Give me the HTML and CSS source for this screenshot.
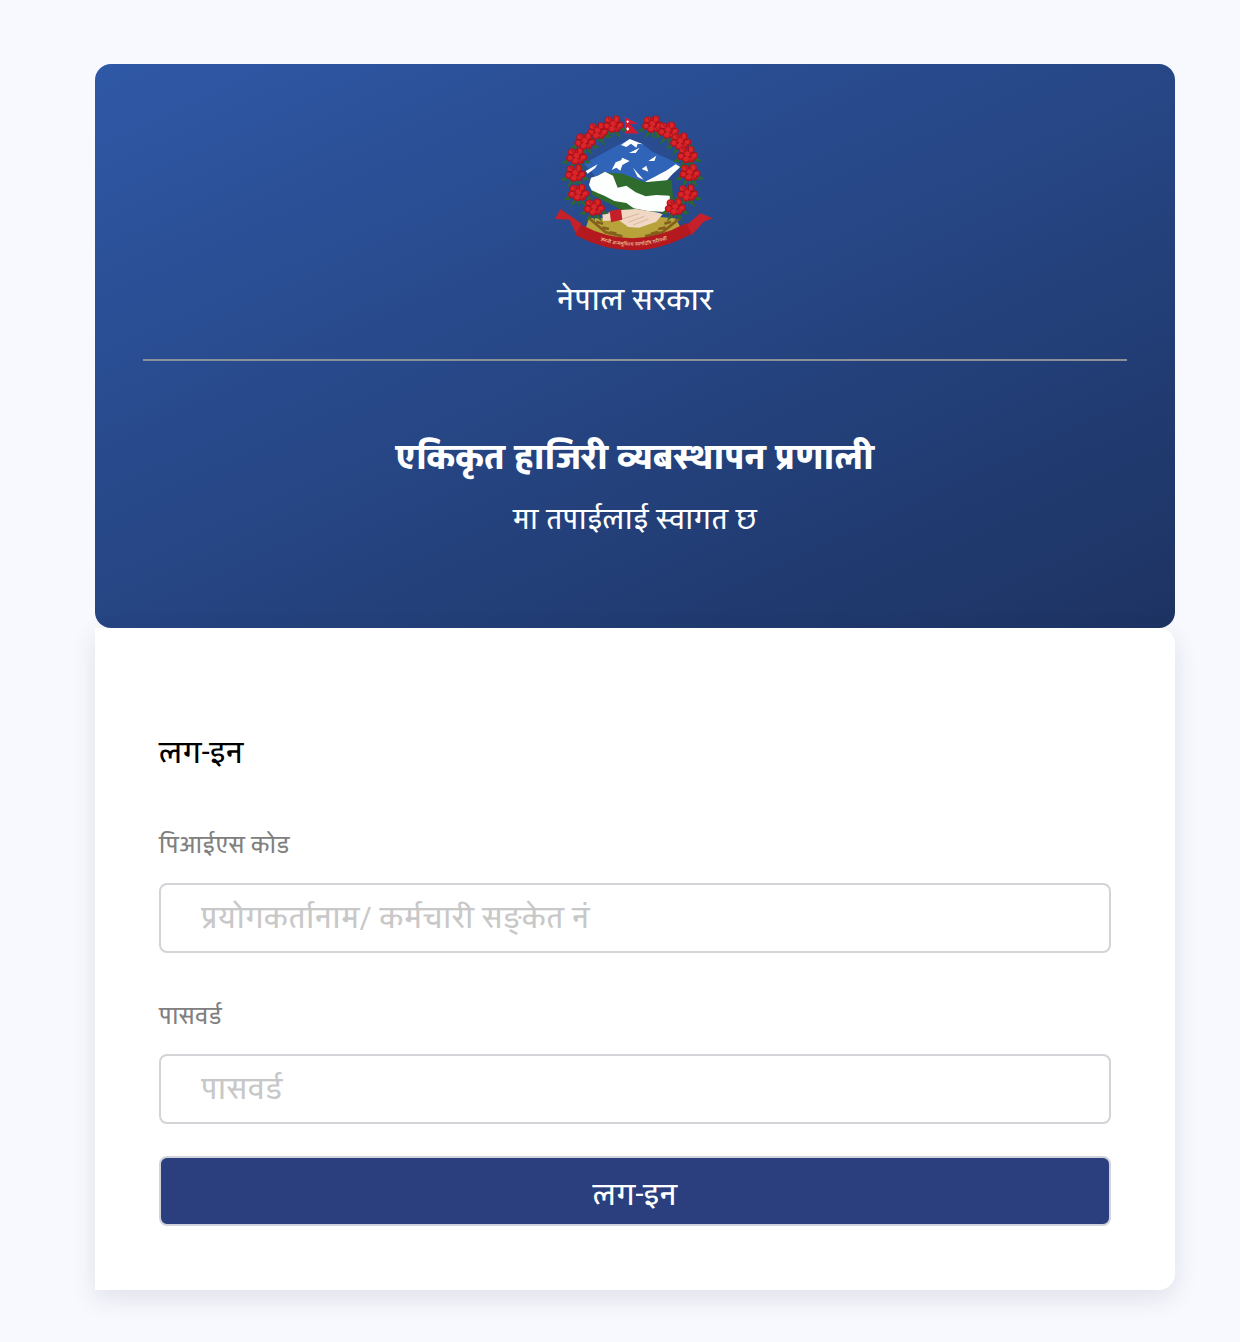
FILE: index.html
```html
<!DOCTYPE html>
<html lang="ne">
<head>
<meta charset="utf-8">
<title>एकिकृत हाजिरी व्यबस्थापन प्रणाली</title>
<link rel="stylesheet" href="styles.css">
</head>
<body>
<main class="wrap">
  <header class="hero">
    <svg class="emblem" viewBox="48 40 480 420" width="160" height="140" aria-hidden="true">
      <defs>
        <g id="fl" transform="scale(.9)">
          <path d="M-30 10 L-50 24 L-26 26Z M30 10 L50 22 L28 26Z M-16 24 L-28 50 L-6 32Z M16 24 L28 50 L6 32Z M-2 26 L0 48 L6 28Z" fill="#2c6a2a"/>
          <g fill="#b8131c">
            <circle cx="-15" cy="-12" r="13"/><circle cx="11" cy="-15" r="13"/><circle cx="24" cy="4" r="12"/><circle cx="-22" cy="7" r="12"/><circle cx="-4" cy="16" r="13"/><circle cx="14" cy="16" r="11"/><circle cx="0" cy="0" r="15"/>
          </g>
          <g fill="#d8262a">
            <circle cx="-16" cy="-13" r="9"/><circle cx="10" cy="-16" r="9"/><circle cx="23" cy="3" r="8"/><circle cx="-21" cy="6" r="8"/><circle cx="-4" cy="15" r="9"/><circle cx="14" cy="15" r="7"/><circle cx="0" cy="-1" r="9"/>
          </g>
          <path d="M-24 -6 L-10 -4 M4 -24 L4 -8 M14 -2 L28 -6 M-12 10 L-4 4 M8 6 L18 22 M-16 -20 L-8 -8" stroke="#7c0c12" stroke-width="2" fill="none"/>
        </g>
      </defs>
      <path d="M135 186 L248 124 L272 112 L312 128 L340 150 L424 188 L404 210 L330 242 L170 225Z" fill="#2f64b8"/>
      <path d="M246 130 L272 112 L312 128 L296 126 L292 138 L276 126 L262 136Z M270 154 L302 138 L290 154Z M218 205 L230 182 L246 176 L250 168 L272 178 L250 190 L244 207 L232 198Z M328 178 L352 162 L346 178Z M308 202 L322 192 L328 210Z M282 198 L314 234 L296 226Z M318 240 L346 226 L368 214 L380 208 L410 188 L424 196 L400 218 L380 240 L352 244Z M140 208 L176 188 L168 200 L146 216Z" fill="#fff"/>
      <path d="M152 240 L190 212 L250 216 L318 242 L398 234 L402 290 L380 330 L260 330 L160 280Z" fill="#2f6b2c"/>
      <path d="M150 250 L156 228 L176 222 L198 210 L222 222 L236 258 L262 252 L290 272 L320 284 L352 280 L392 282 L394 332 L326 328 L284 320 L262 304 L226 298 L196 282 L176 274 L158 266Z" fill="#fdfefe"/>
      <path d="M136 392 L150 350 L230 350 L350 345 L410 350 L432 392 L380 420 L190 420Z" fill="#b8a23c"/>
      <path d="M190 338 L236 326 L290 322 L342 330 L372 336 L352 360 L300 378 L268 376 L240 356 L192 358Z" fill="#f1d8c4"/>
      <path d="M212 328 L246 322 L250 354 L216 362Z" fill="#c3202a"/>
      <path d="M250 352 L300 336 M268 362 L316 344 M282 370 L328 352" stroke="#c9a78f" stroke-width="2" fill="none"/>
      <path d="M150 350 L200 392 L250 404 M192 366 L172 360 M210 382 L190 378 M232 396 L212 392 M420 352 L370 392 L318 404 M376 366 L396 360 M358 382 L380 378 M336 396 L358 390" stroke="#84601c" stroke-width="8" fill="none"/>
      <path d="M48 352 L64 322 L128 366 L112 398 L92 354Z M522 350 L484 335 L440 372 L456 402 L494 360Z" fill="#c4212b"/>
      <path d="M118 385 Q285 473 450 380" fill="none" stroke="#b3191f" stroke-width="36"/>
      <path id="ribtxt" d="M122 392 Q285 476 446 386" fill="none"/>
      <text class="motto"><textPath href="#ribtxt" startOffset="50%" text-anchor="middle">जननी जन्मभूमिश्च स्वर्गादपि गरीयसी</textPath></text>
      <path d="M256 44 L302 68 L275 68 L302 97 L256 97Z" fill="#d11a2d" stroke="#2d4fa0" stroke-width="3"/>
      <path d="M262 60 L266 56 L270 60 L266 64Z M261 82 L266 76 L271 82 L266 88Z" fill="#fff"/>
      <use href="#fl" x="222" y="67"/><use href="#fl" x="340" y="67"/>
      <use href="#fl" x="175" y="87"/><use href="#fl" x="387" y="85"/>
      <use href="#fl" x="137" y="118"/><use href="#fl" x="424" y="118"/>
      <use href="#fl" x="112" y="163"/><use href="#fl" x="445" y="158"/>
      <use href="#fl" x="108" y="214"/><use href="#fl" x="452" y="212"/>
      <use href="#fl" x="118" y="272"/><use href="#fl" x="445" y="273"/>
      <use href="#fl" x="165" y="316"/><use href="#fl" x="408" y="315"/>
    </svg>
    <p class="gov">नेपाल सरकार</p>
    <hr class="rule">
    <h1 class="title">एकिकृत हाजिरी व्यबस्थापन प्रणाली</h1>
    <p class="welcome">मा तपाईलाई स्वागत छ</p>
  </header>
  <section class="card">
    <h2 class="login-title">लग-इन</h2>
    <form class="form">
      <label class="label" for="pis">पिआईएस कोड</label>
      <input class="input" id="pis" type="text" placeholder="प्रयोगकर्तानाम/ कर्मचारी सङ्केत नं">
      <label class="label label-pass" for="pw">पासवर्ड</label>
      <input class="input" id="pw" type="password" placeholder="पासवर्ड">
      <button class="btn" type="button">लग-इन</button>
    </form>
  </section>
</main>
</body>
</html>
```
FILE: styles.css
```css
* { box-sizing: border-box; }
html, body { margin: 0; }
body {
  background: #f8f9fe;
  font-family: "Yantramanav", "Hind", "Noto Sans", sans-serif;
  min-height: 1342px;
}
.wrap {
  width: 1080px;
  margin-left: 95px;
  padding-top: 64px;
}
.hero {
  height: 564px;
  padding: 48px 48px 0;
  border-radius: 16px;
  background: linear-gradient(155deg, #2f58a6 0%, #1d3362 100%);
  color: #fff;
  text-align: center;
  display: flex;
  flex-direction: column;
  align-items: center;
}
.emblem { display: block; margin-top: 3px; flex: none; }
.gov { margin: 25px 0 0; font-size: 32px; line-height: 42px; font-weight: 400; }
.rule {
  width: 100%;
  height: 2px;
  margin: 37px 0 0;
  border: 0;
  background: #8c9098;
}
.title { margin: 73px 0 0; font-size: 36px; line-height: 50px; font-weight: 900; }
.welcome { margin: 17px 0 0; font-size: 30px; line-height: 40px; font-weight: 400; }
.motto { font-size: 16px; fill: #f4d9a8; }
.card {
  height: 662px;
  padding: 102px 64px 0;
  background: #fff;
  border-radius: 0 16px 16px 0;
  box-shadow: 0 8px 24px rgba(40,50,90,.12);
}
.login-title { margin: 0; font-size: 32px; line-height: 48px; font-weight: 400; color: #000; }
.form { display: flex; flex-direction: column; margin-top: 52px; }
.label { font-size: 24.7px; line-height: 32px; color: #808080; font-weight: 400; }
.label-pass { margin-top: 48px; }
.input {
  height: 70px;
  margin-top: 21px;
  padding: 0 40px;
  border: 2px solid #d2d4d8;
  border-radius: 8px;
  background: #fff;
  font: inherit;
  font-size: 32px;
}
.input::placeholder { color: #c8c8c8; opacity: 1; }
.btn {
  height: 70px;
  margin-top: 32px;
  padding-top: 10px;
  border: 2px solid #d0d3dc;
  border-radius: 8px;
  background: #2b3f7e;
  color: #fff;
  font: inherit;
  font-size: 32px;
  font-weight: 400;
}
```
